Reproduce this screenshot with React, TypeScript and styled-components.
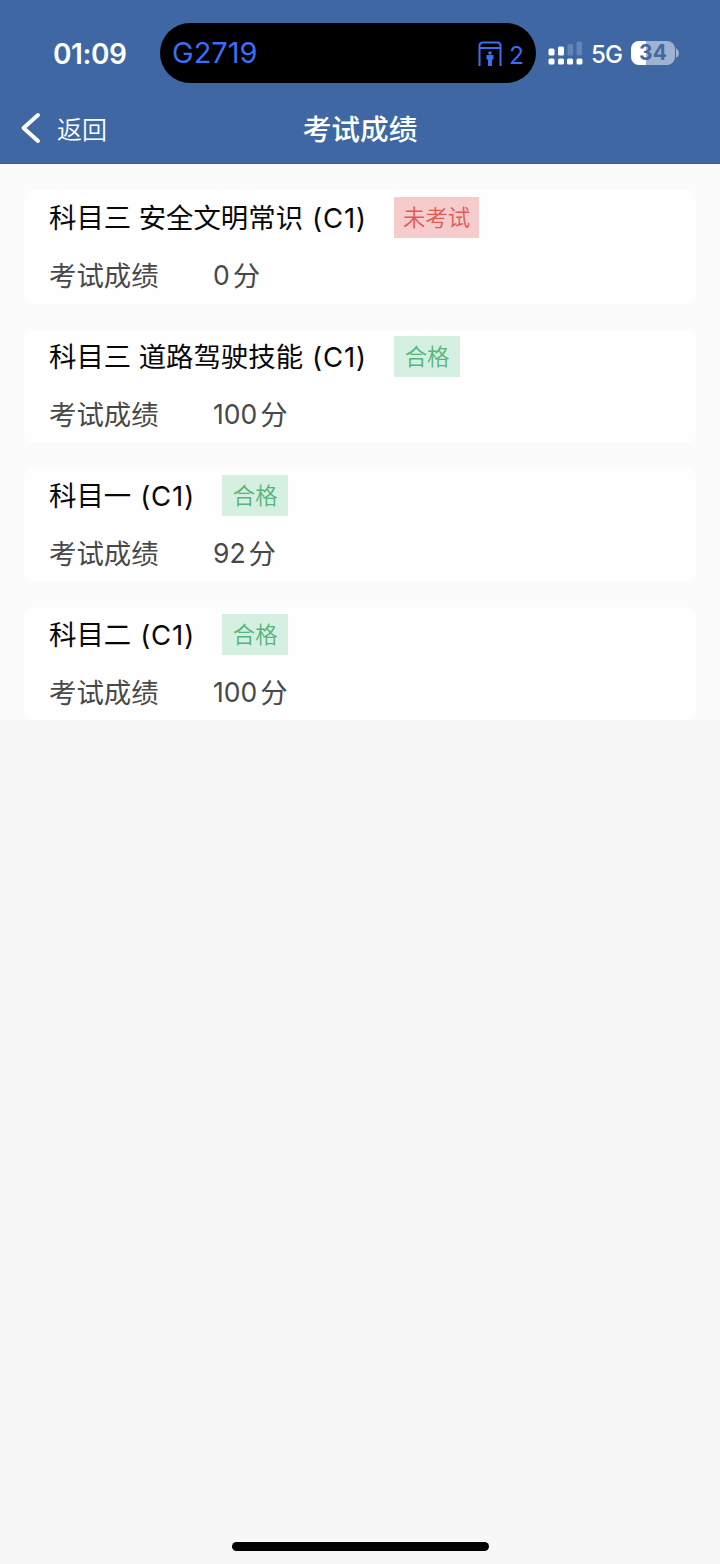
import React from 'react';
import styled, { createGlobalStyle } from 'styled-components';

const Global = createGlobalStyle`
  * { box-sizing: border-box; }
  body {
    margin: 0;
    background: #f7f7f7;
    font-family: Inter, "Noto Sans CJK SC", sans-serif;
  }
`;

const Screen = styled.div`
  display: flex;
  flex-direction: column;
  width: 720px;
  height: 1564px;
  overflow: hidden;
  background: #f7f7f7;
`;

const Header = styled.header`
  height: 164px;
  background: #3e67a3;
  border-bottom: 1px solid #3a6195;
  color: #fff;
`;

const StatusBar = styled.div`
  display: flex;
  align-items: center;
  height: 92px;
  padding: 14px 40px 0 53px;
`;

const Clock = styled.div`
  width: 107px;
  padding-top: 2px;
  font-size: 28px;
  font-weight: 600;
  line-height: 40px;
  letter-spacing: -0.45px;
  white-space: nowrap;
`;

const Island = styled.div`
  display: flex;
  align-items: center;
  width: 376px;
  height: 60px;
  padding: 0 12px;
  border-radius: 30px;
  background: #000;
  color: #3c6df5;
  font-size: 29px;
  line-height: 40px;
`;

const Train = styled.span`
  flex: 1;
`;

const GateIcon = styled.svg`
  width: 24px;
  height: 26px;
  margin-top: 1px;
  margin-right: 7px;
`;

const Gate = styled.span`
  padding-top: 3px;
  font-size: 24.5px;
`;

const SignalIcon = styled.svg`
  width: 35px;
  height: 24px;
  margin-left: 12px;
`;

const Network = styled.span`
  width: 31px;
  margin-left: 8px;
  padding-top: 3px;
  font-size: 24px;
  font-weight: 450;
  line-height: 32px;
  letter-spacing: -0.9px;
`;

const Battery = styled.div`
  width: 44px;
  height: 24px;
  margin-left: 9px;
  border-radius: 8px;
  background: linear-gradient(90deg, #fff 15px, #9fb3d1 15px);
  color: #4568a0;
  font-size: 21px;
  font-weight: 650;
  line-height: 24px;
  text-align: center;
`;

const BatteryTip = styled.svg`
  width: 3px;
  height: 10px;
  margin-left: 1px;
`;

const NavBar = styled.nav`
  display: grid;
  grid-template-columns: 200px 1fr 200px;
  align-items: center;
  height: 71px;
  padding-top: 1px;
`;

const Back = styled.div`
  display: flex;
  align-items: center;
  padding-left: 20px;
  font-size: 25px;
  font-weight: 350;
  line-height: 36px;
`;

const BackText = styled.span`
  padding-top: 3px;
`;

const Chevron = styled.svg`
  width: 22px;
  height: 32px;
  margin-right: 15px;
`;

const Title = styled.h1`
  margin: 0;
  padding-top: 3px;
  font-size: 28.7px;
  font-weight: 500;
  line-height: 40px;
  text-align: center;
`;

const List = styled.main`
  display: flex;
  flex-direction: column;
  gap: 25px;
  height: 556px;
  padding: 26px 24px 0 24px;
  overflow: hidden;
  background: #fbfbfb;
`;

const Card = styled.section`
  flex: none;
  height: 114px;
  padding: 7px 25px 0;
  border-radius: 8px;
  background: #fefefe;
  box-shadow: 0 0 2px rgba(0, 0, 0, 0.025);
`;

const Row = styled.div`
  display: flex;
  align-items: center;
  height: 41px;
  font-size: 27.4px;
  line-height: 40px;
  white-space: nowrap;
`;

const Subject = styled(Row)`
  color: #080808;
`;

const Score = styled(Row)`
  margin-top: 17px;
  color: #484848;
`;

const Name = styled.span`
  padding-top: 1px;
  word-spacing: -0.2px;
`;

const Licence = styled.span`
  width: 54px;
  margin-left: 9px;
  font-size: 27.5px;
  letter-spacing: 0.9px;
`;

const Tag = styled.span<{ $passed: boolean }>`
  width: ${(p) => (p.$passed ? 66 : 85)}px;
  height: 41px;
  margin-left: 28px;
  background: ${(p) => (p.$passed ? '#d5f0e1' : '#f6cbcc')};
  color: ${(p) => (p.$passed ? '#55b47c' : '#e05a58')};
  font-size: 22.4px;
  font-weight: 350;
  line-height: 41px;
  text-align: center;
`;

const Label = styled.span`
  width: 164px;
`;

const Points = styled.span`
  margin-right: 3px;
  padding-bottom: 2px;
  font-size: 26.5px;
`;

const Footer = styled.footer`
  display: flex;
  justify-content: center;
  margin-top: auto;
  padding-bottom: 13px;
`;

const HomeIndicator = styled.div`
  width: 257px;
  height: 9px;
  border-radius: 5px;
  background: #000;
`;

const results = [
  { name: '科目三 安全文明常识', score: 0, status: '未考试' },
  { name: '科目三 道路驾驶技能', score: 100, status: '合格' },
  { name: '科目一', score: 92, status: '合格' },
  { name: '科目二', score: 100, status: '合格' },
];

export default function App() {
  return (
    <Screen>
      <Global />
      <Header>
        <StatusBar>
          <Clock>01:09</Clock>
          <Island>
            <Train>G2719</Train>
            <GateIcon viewBox="0 0 24 26" fill="none" stroke="#3c6df5" strokeWidth="2">
              <path d="M1.5 25V5Q1.5 1.5 5 1.5H19Q22.5 1.5 22.5 5V25M2 7H22" />
              <circle cx="12" cy="12" r="1.8" fill="#3c6df5" stroke="none" />
              <path d="M8.5 14H15.5V18.5H14V25H10V18.5H8.5Z" fill="#3c6df5" stroke="none" />
            </GateIcon>
            <Gate>2</Gate>
          </Island>
          <SignalIcon viewBox="0 0 35 24" fill="#fff">
            <rect x="0.5" y="7.5" width="6" height="7" rx="1.5" />
            <rect x="10" y="5.5" width="6" height="9" rx="1.5" />
            <rect x="19.5" y="3" width="5.5" height="11.5" rx="1.5" fill="#6485b8" />
            <rect x="28.5" y="0.5" width="5.5" height="14" rx="1.5" fill="#6485b8" />
            <rect x="0.5" y="17.5" width="6" height="6" rx="1.5" />
            <rect x="10" y="17.5" width="6" height="6" rx="1.5" />
            <rect x="19" y="17.5" width="6" height="6" rx="1.5" />
            <rect x="28.5" y="17.5" width="6" height="6" rx="1.5" />
          </SignalIcon>
          <Network>5G</Network>
          <Battery>34</Battery>
          <BatteryTip viewBox="0 0 3 10" fill="#9fb3d1">
            <path d="M0 0Q3 2 3 5T0 10Z" />
          </BatteryTip>
        </StatusBar>
        <NavBar>
          <Back>
            <Chevron viewBox="0 0 22 32" fill="none" stroke="#fff" strokeWidth="4" strokeLinecap="round" strokeLinejoin="round">
              <path d="M18 3L3.5 16L18 29" />
            </Chevron>
            <BackText>返回</BackText>
          </Back>
          <Title>考试成绩</Title>
        </NavBar>
      </Header>
      <List>
        {results.map((r) => (
          <Card key={r.name}>
            <Subject>
              <Name>{r.name}</Name>
              <Licence>(C1)</Licence>
              <Tag $passed={r.status === '合格'}>{r.status}</Tag>
            </Subject>
            <Score>
              <Label>考试成绩</Label>
              <Points>{r.score}</Points>分
            </Score>
          </Card>
        ))}
      </List>
      <Footer>
        <HomeIndicator />
      </Footer>
    </Screen>
  );
}
